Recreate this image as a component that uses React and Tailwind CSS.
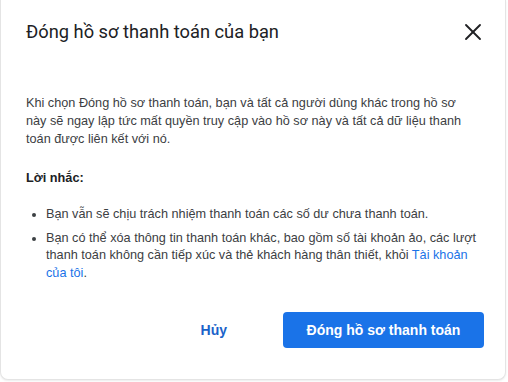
import { X } from "lucide-react";

export default function App() {
  return (
    <div className="h-[382px] w-[508px] bg-white" style={{ fontFamily: "'Liberation Sans', Arial, sans-serif" }}>
      <div className="flex h-[380px] w-[506px] flex-col rounded-b-lg border-x border-b border-[#e4e4e4] bg-white shadow-[0_1px_2px_rgba(0,0,0,0.08)]">
        <div className="flex items-center justify-between pl-[25px] pr-[18px] pt-[18px]">
          <h2 className="font-['Roboto',sans-serif] text-[18.3px] leading-[26px] text-[#202124]">
            Đóng hồ sơ thanh toán của bạn
          </h2>
          <X className="h-[28px] w-[28px] text-[#202124]" strokeWidth={1.6} />
        </div>

        <div className="pl-[25px] pr-[21px] pt-[48px] text-[12.7px] leading-[18px] text-[#3c4043]">
          <p className="max-w-[450px]">
            Khi chọn Đóng hồ sơ thanh toán, bạn và tất cả người dùng khác trong hồ sơ
            này sẽ ngay lập tức mất quyền truy cập vào hồ sơ này và tất cả dữ liệu thanh
            toán được liên kết với nó.
          </p>
          <p className="mt-[21px] font-bold text-[#202124]">Lời nhắc:</p>
          <ul className="mt-[19px] flex flex-col gap-[6px] pl-[20px]">
            <li className="list-disc leading-[17.5px]">
              Bạn vẫn sẽ chịu trách nhiệm thanh toán các số dư chưa thanh toán.
            </li>
            <li className="list-disc leading-[17.5px]">
              Bạn có thể xóa thông tin thanh toán khác, bao gồm số tài khoản ảo, các lượt
              thanh toán không cần tiếp xúc và thẻ khách hàng thân thiết, khỏi{" "}
              <a className="text-[#1a73e8]">Tài khoản của tôi</a>.
            </li>
          </ul>
        </div>

        <div className="mt-auto flex items-center justify-end gap-[40px] px-[21px] pb-[31px]">
          <button className="h-[36px] px-[16px] text-[14px] font-bold text-[#1a62c9]">Hủy</button>
          <button className="h-[36px] w-[201px] rounded-[4px] bg-[#1a73e8] text-[14px] font-bold text-white">
            Đóng hồ sơ thanh toán
          </button>
        </div>
      </div>
    </div>
  );
}
